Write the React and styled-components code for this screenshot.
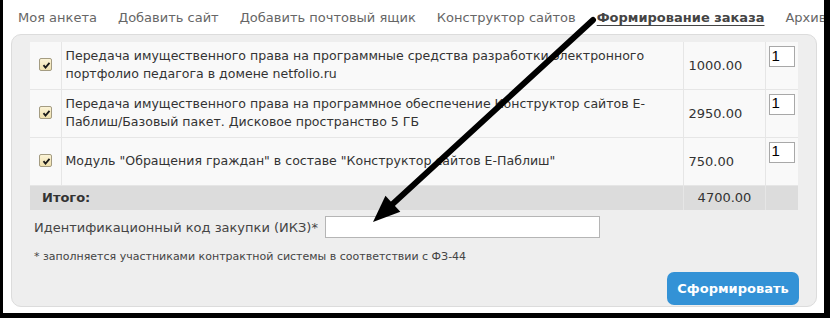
import React from "react";
import styled, { createGlobalStyle } from "styled-components";

const Global = createGlobalStyle`
  html, body { margin: 0; padding: 0; background: #000; }
  * { box-sizing: border-box; }
`;

const Frame = styled.div`
  position: relative;
  width: 830px;
  height: 318px;
  background: #fff;
  border-left: 3px solid #000;
  border-right: 6px solid #000;
  border-bottom: 5px solid #000;
  font-family: Verdana, "DejaVu Sans", sans-serif;
  color: #333;
  overflow: hidden;
`;

const Nav = styled.nav`
  display: flex;
  align-items: center;
  height: 34px;
  padding-left: 15px;
  white-space: nowrap;
  gap: 21px;
`;

const NavItem = styled.span`
  font-size: 13px;
  color: ${(p) => (p.$active ? "#444" : "#666")};
  font-weight: ${(p) => (p.$active ? "bold" : "normal")};
  text-decoration: ${(p) => (p.$active ? "underline" : "none")};
  text-underline-offset: 3px;
`;

const Panel = styled.section`
  margin: 0 7px 0 8px;
  height: 273px;
  background: #eee;
  border: 1px solid #dcdcdc;
  border-radius: 10px;
  padding: 7px 18px 0 18px;
  display: flex;
  flex-direction: column;
`;

const Table = styled.table`
  width: 768px;
  border-collapse: collapse;
  background: #f9f9f9;
  font-size: 13px;
  color: #333;
`;

const Row = styled.tr`
  height: ${(p) => p.$h}px;
  background: ${(p) => (p.$total ? "#dcdcdc" : "#f9f9f9")};
`;

const Cell = styled.td`
  padding: ${(p) => p.$pad || "0 5px"};
  vertical-align: ${(p) => p.$valign || "middle"};
  text-align: ${(p) => p.$align || "left"};
  width: ${(p) => (p.$w ? p.$w + "px" : "auto")};
  border-right: ${(p) => (p.$last ? "none" : "1px solid #e6e6e6")};
  border-bottom: ${(p) => (p.$noBottom ? "none" : "1px solid #e6e6e6")};
  line-height: 18px;
  font-size: ${(p) => (p.$desc ? "12.55px" : "13px")};
  font-weight: ${(p) => (p.$bold ? "bold" : "normal")};
`;

const CheckBox = styled.span`
  display: inline-block;
  width: 13px;
  height: 13px;
  border: 1px solid #a49c82;
  border-radius: 2px;
  background: linear-gradient(#fbf3d6, #efe0ad);
  position: relative;
  vertical-align: middle;
  svg { position: absolute; left: 1px; top: 1px; }
`;

const QtyInput = styled.input`
  width: 26px;
  height: 21px;
  border: 1px solid #a8a8a8;
  background: #fff;
  font-family: "Liberation Sans", Arial, sans-serif;
  font-size: 15px;
  padding: 0 0 3px 2px;
  color: #000;
  outline: none;
`;

const FieldRow = styled.div`
  display: flex;
  align-items: center;
  margin-top: 6px;
  padding-left: 4px;
  gap: 7px;
`;

const Label = styled.label`
  font-size: 13px;
  color: #444;
`;

const TextInput = styled.input`
  width: 275px;
  height: 22px;
  border: 1px solid #b5b5b5;
  background: #fff;
  outline: none;
`;

const Note = styled.div`
  font-size: 11px;
  color: #444;
  padding-left: 4px;
  margin-top: 12px;
`;

const Actions = styled.div`
  display: flex;
  justify-content: flex-end;
  margin-top: 9px;
`;

const Button = styled.button`
  width: 132px;
  height: 33px;
  border: none;
  border-radius: 7px;
  background: #3392d6;
  color: #fff;
  font-family: Verdana, "DejaVu Sans", sans-serif;
  font-weight: bold;
  font-size: 13px;
  padding: 0;
  margin-right: -1px;
`;

const ArrowSvg = styled.svg`
  position: absolute;
  left: -3px;
  top: 0;
  pointer-events: none;
`;

const Check = () => (
  <CheckBox>
    <svg width="11" height="11" viewBox="0 0 11 11">
      <path d="M2.5 5.2 L4.5 7.6 L8.5 2.8" fill="none" stroke="#1a1a1a" strokeWidth="1.8" />
    </svg>
  </CheckBox>
);

const items = [
  {
    text: (
      <>
        Передача имущественного права на программные средства разработки электронного
        <br />
        портфолио педагога в домене netfolio.ru
      </>
    ),
    price: "1000.00",
    h: 47,
  },
  {
    text: (
      <>
        Передача имущественного права на программное обеспечение Конструктор сайтов Е-
        <br />
        Паблиш/Базовый пакет. Дисковое пространство 5 ГБ
      </>
    ),
    price: "2950.00",
    h: 48,
  },
  {
    text: <>Модуль "Обращения граждан" в составе "Конструктор сайтов Е-Паблиш"</>,
    price: "750.00",
    h: 48,
  },
];

function Arrow() {
  const x1 = 593, y1 = 20, tx = 373, ty = 222;
  const dx = tx - x1, dy = ty - y1;
  const len = Math.hypot(dx, dy);
  const ux = dx / len, uy = dy / len;
  const hl = 27, hw = 11;
  const bx = tx - ux * hl, by = ty - uy * hl;
  const px = -uy, py = ux;
  const pts = `${tx},${ty} ${bx + px * hw},${by + py * hw} ${bx - px * hw},${by - py * hw}`;
  return (
    <ArrowSvg width="830" height="318">
      <line x1={x1} y1={y1} x2={bx + ux * 2} y2={by + uy * 2} stroke="#000" strokeWidth="6" strokeLinecap="round" />
      <polygon points={pts} fill="#000" />
    </ArrowSvg>
  );
}

export default function App() {
  return (
    <>
      <Global />
      <Frame>
        <Nav>
          <NavItem>Моя анкета</NavItem>
          <NavItem>Добавить сайт</NavItem>
          <NavItem>Добавить почтовый ящик</NavItem>
          <NavItem>Конструктор сайтов</NavItem>
          <NavItem $active>Формирование заказа</NavItem>
          <NavItem>Архив</NavItem>
        </Nav>
        <Panel>
          <Table>
            <tbody>
              {items.map((it, i) => (
                <Row key={i} $h={it.h}>
                  <Cell $w={31} $align="center" $pad="0 0 2px 0">
                    <Check />
                  </Cell>
                  <Cell $desc $pad="0 4px">{it.text}</Cell>
                  <Cell $w={82} $pad="2px 5px 0 5px">{it.price}</Cell>
                  <Cell $w={33} $last $valign="top" $pad="4px 0 0 3px">
                    <QtyInput defaultValue="1" />
                  </Cell>
                </Row>
              ))}
              <Row $total $h={25}>
                <Cell colSpan={2} $bold $noBottom $pad="0 12px">Итого:</Cell>
                <Cell $noBottom $align="center" $pad="0 5px 0 6px">4700.00</Cell>
                <Cell $last $noBottom />
              </Row>
            </tbody>
          </Table>
          <FieldRow>
            <Label>Идентификационный код закупки (ИКЗ)*</Label>
            <TextInput />
          </FieldRow>
          <Note>* заполняется участниками контрактной системы в соответствии с ФЗ-44</Note>
          <Actions>
            <Button>Сформировать</Button>
          </Actions>
        </Panel>
        <Arrow />
      </Frame>
    </>
  );
}
